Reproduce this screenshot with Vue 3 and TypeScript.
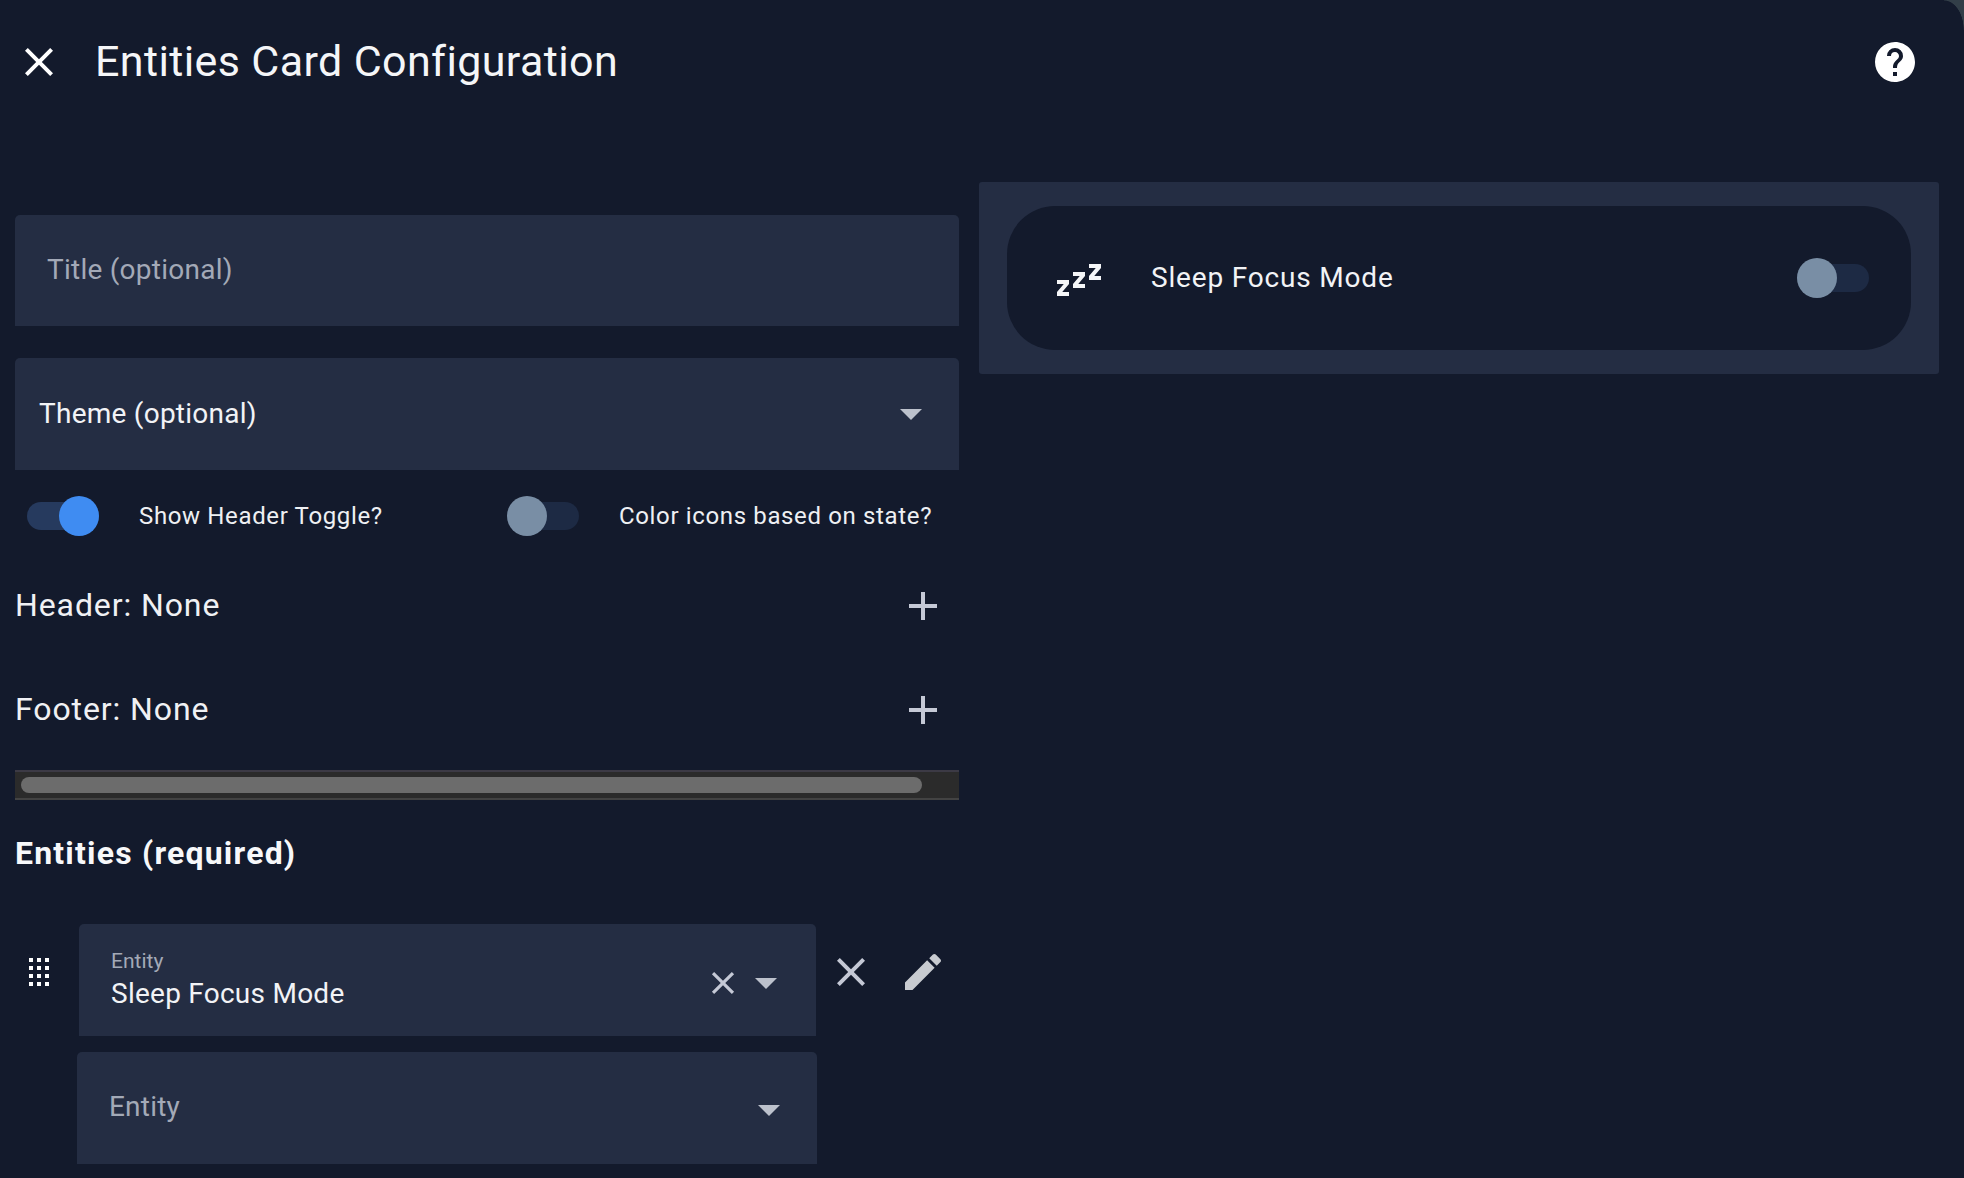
<script setup lang="ts">
const mdi = {
  close: 'M19,6.41L17.59,5L12,10.59L6.41,5L5,6.41L10.59,12L5,17.59L6.41,19L12,13.41L17.59,19L19,17.59L13.41,12L19,6.41Z',
  help: 'M15.07,11.25L14.17,12.17C13.45,12.89 13,13.5 13,15H11V14.5C11,13.39 11.45,12.39 12.17,11.67L13.41,10.41C13.78,10.05 14,9.55 14,9C14,7.89 13.1,7 12,7A2,2 0 0,0 10,9H8A4,4 0 0,1 12,5A4,4 0 0,1 16,9C16,9.88 15.64,10.67 15.07,11.25M13,19H11V17H13M12,2A10,10 0 0,0 2,12A10,10 0 0,0 12,22C17.53,22 22,17.5 22,12C22,6.47 17.53,2 12,2Z',
  plus: 'M19,13H13V19H11V13H5V11H11V5H13V11H19V13Z',
  pencil: 'M20.71,7.04C21.1,6.65 21.1,6 20.71,5.63L18.37,3.29C18,2.9 17.35,2.9 16.96,3.29L15.12,5.12L18.87,8.87M3,17.25V21H6.75L17.81,9.93L14.06,6.18L3,17.25Z',
  sleep: 'M23,12H17V10L20.39,6H17V4H23V6L19.62,10H23V12M15,16H9V14L12.39,10H9V8H15V10L11.62,14H15V16M7,20H1V18L4.39,14H1V12H7V14L3.62,18H7V20Z',
  drag: 'M7,19V17H9V19H7M11,19V17H13V19H11M15,19V17H17V19H15M7,15V13H9V15H7M11,15V13H13V15H11M15,15V13H17V15H15M7,11V9H9V11H7M11,11V9H13V11H11M15,11V9H17V11H15M7,7V5H9V7H7M11,7V5H13V7H11M15,7V5H17V7H15Z',
}
</script>

<template>
  <div class="page">
    <header class="head">
      <svg class="i48 white" viewBox="0 0 24 24"><path :d="mdi.close" /></svg>
      <h1 class="title">Entities Card Configuration</h1>
      <svg class="i48 white" viewBox="0 0 24 24"><path :d="mdi.help" /></svg>
    </header>
    <main class="cols">
      <section class="left">
        <div class="field plain"><span class="nudge">Title (optional)</span></div>
        <div class="field select">
          <span class="theme nudge">Theme (optional)</span>
          <span class="arrow"></span>
        </div>
        <div class="toggles">
          <div class="toggle-item first">
            <span class="sw on"><span class="thumb"></span></span>
            <span class="lbl">Show Header Toggle?</span>
          </div>
          <div class="toggle-item second">
            <span class="sw"><span class="thumb"></span></span>
            <span class="lbl">Color icons based on state?</span>
          </div>
        </div>
        <div class="row header-row">
          <span class="nudge">Header: None</span>
          <svg class="i48 soft" viewBox="0 0 24 24"><path :d="mdi.plus" /></svg>
        </div>
        <div class="row footer-row">
          <span class="nudge">Footer: None</span>
          <svg class="i48 soft" viewBox="0 0 24 24"><path :d="mdi.plus" /></svg>
        </div>
        <div class="scrollbar"><div class="scroll-thumb"></div></div>
        <h2 class="entities">Entities (required)</h2>
        <div class="entity-row">
          <svg class="i48 white handle" viewBox="0 0 24 24"><path :d="mdi.drag" /></svg>
          <div class="field entity">
            <div class="stack">
              <span class="small">Entity</span>
              <span class="value">Sleep Focus Mode</span>
            </div>
            <svg class="clear soft" viewBox="0 0 24 24"><path :d="mdi.close" /></svg>
            <span class="arrow entity-arrow"></span>
          </div>
          <div class="row-actions">
            <svg class="i48 soft" viewBox="0 0 24 24"><path :d="mdi.close" /></svg>
            <svg class="i48 grey" viewBox="0 0 24 24"><path :d="mdi.pencil" /></svg>
          </div>
        </div>
        <div class="field add">
          <span class="placeholder">Entity</span>
          <span class="arrow add-arrow"></span>
        </div>
      </section>
      <aside class="right">
        <div class="preview">
          <div class="pill">
            <svg class="i48 zzz" viewBox="0 0 24 24"><path :d="mdi.sleep" /></svg>
            <span class="pill-name">Sleep Focus Mode</span>
            <span class="sw"><span class="thumb"></span></span>
          </div>
        </div>
      </aside>
    </main>
    <div class="corner"></div>
  </div>
</template>

<style>
html, body { margin: 0; background: #131a2c; }
</style>

<style scoped>
.page {
  position: relative;
  width: 1964px;
  height: 1178px;
  overflow: hidden;
  background: #131a2c;
  color: #f5f6f8;
  font-family: Roboto, "Liberation Sans", sans-serif;
}
.head {
  height: 124px;
  display: flex;
  align-items: center;
  padding: 0 45px 0 15px;
  box-sizing: border-box;
}
.title {
  flex: 1;
  margin: -2px 0 0 32px;
  font-size: 43px;
  font-weight: 400;
  letter-spacing: 0.38px;
  line-height: 1;
}
.i48 { width: 48px; height: 48px; flex: none; }
svg path { fill: currentColor; }
.white { color: #fff; }
.soft { color: #c5c9d6; }
.grey { color: #c8cbd0; }
.cols { display: flex; gap: 20px; padding: 0 25px 0 15px; }
.left { width: 944px; flex: none; padding-top: 91px; }
.right { flex: 1; padding-top: 58px; }
.nudge { margin-top: -2px; }
.field {
  background: #242d43;
  border-radius: 5px 5px 0 0;
  box-sizing: border-box;
  display: flex;
  align-items: center;
}
.plain {
  height: 111px;
  padding-left: 32px;
  font-size: 28px;
  letter-spacing: 0.25px;
  color: #a3a9b7;
}
.select {
  height: 112px;
  margin-top: 32px;
  padding: 0 37px 0 24px;
  justify-content: space-between;
  font-size: 28px;
  letter-spacing: 0.25px;
}
.theme { color: #f2f3f6; }
.arrow {
  width: 0;
  height: 0;
  flex: none;
  border-left: 11px solid transparent;
  border-right: 11px solid transparent;
  border-top: 11px solid #bcc1cc;
}
.toggles { display: flex; height: 92px; align-items: center; padding-left: 12px; }
.toggle-item { display: flex; align-items: center; }
.first { width: 480px; }
.lbl { font-size: 24px; letter-spacing: 0.64px; margin-left: 40px; color: #eef0f3; }
.sw {
  position: relative;
  display: block;
  flex: none;
  width: 72px;
  height: 28px;
  border-radius: 14px;
  background: #1d2a44;
}
.sw.on { background: #263a5e; }
.thumb {
  position: absolute;
  left: 0;
  top: -6px;
  width: 40px;
  height: 40px;
  border-radius: 50%;
  background: #798ea5;
}
.on .thumb { left: 32px; background: #3f8cf2; }
.row {
  display: flex;
  align-items: center;
  justify-content: space-between;
  padding-right: 12px;
  font-size: 32px;
  letter-spacing: 0.9px;
  color: #f0f1f4;
}
.header-row { height: 48px; margin-top: 20px; }
.footer-row { height: 48px; margin-top: 56px; }
.scrollbar {
  height: 30px;
  margin-top: 36px;
  box-sizing: border-box;
  background: #2b2b2b;
  border-top: 2px solid #3c3a45;
  border-bottom: 2px solid #434343;
  padding: 5px 37px 0 6px;
}
.scroll-thumb { height: 16px; border-radius: 8px; background: #6c6c6c; }
.entities {
  margin: 0;
  height: 124px;
  box-sizing: border-box;
  padding-top: 34px;
  font-size: 32px;
  font-weight: 700;
  letter-spacing: 1.2px;
  line-height: 38px;
  color: #f7f8fa;
}
.entity-row { display: flex; align-items: flex-start; }
.handle { margin-top: 24px; }
.entity {
  width: 737px;
  height: 112px;
  margin-left: 16px;
  padding: 0 39px 0 32px;
}
.stack { flex: 1; display: flex; flex-direction: column; }
.small { font-size: 21px; color: #a3a9b7; line-height: 26px; }
.value { font-size: 28px; letter-spacing: 0.25px; color: #f2f3f6; line-height: 36px; margin-top: 2px; }
.clear { width: 38px; height: 38px; flex: none; margin-top: 6px; }
.entity-arrow { margin: 6px 0 0 13px; }
.row-actions { display: flex; gap: 24px; margin: 24px 0 0 11px; }
.add {
  width: 740px;
  height: 112px;
  margin: 16px 0 0 62px;
  padding: 0 37px 0 32px;
  justify-content: space-between;
}
.placeholder { font-size: 28px; letter-spacing: 0.2px; color: #a3a9b7; margin-top: -3px; }
.add-arrow { margin-top: 4px; }
.preview {
  background: #242d43;
  border-radius: 3px;
  padding: 24px 28px;
}
.pill {
  height: 144px;
  border-radius: 48px;
  background: #131a2c;
  display: flex;
  align-items: center;
  padding: 0 42px 0 48px;
}
.zzz { color: #f5f6f8; margin-top: 4px; }
.pill-name {
  flex: 1;
  margin: -2px 0 0 48px;
  font-size: 28px;
  letter-spacing: 0.82px;
  color: #f2f3f6;
}
.corner {
  position: absolute;
  top: 0;
  right: 0;
  width: 20px;
  height: 30px;
  background: radial-gradient(ellipse 20px 30px at 0 100%, transparent 97%, #323e48 100%);
}
</style>
